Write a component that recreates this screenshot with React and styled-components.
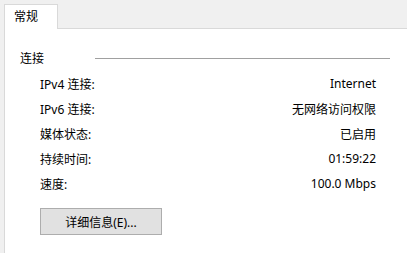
import React from "react";
import styled, { createGlobalStyle } from "styled-components";

const Global = createGlobalStyle`
  html, body { margin: 0; padding: 0; background: #f0f0f0; }
  body {
    width: 407px; height: 253px; overflow: hidden;
    font-family: "Noto Sans", "Noto Sans CJK SC", sans-serif;
    font-size: 12px; color: #000;
  }
`;

const Window = styled.div`
  display: flex;
  flex-direction: column;
  width: 407px;
  height: 253px;
`;

const TabStrip = styled.div`
  display: flex;
  align-items: flex-end;
  height: 28px;
  padding-left: 4px;
  position: relative;
  z-index: 1;
`;

const Tab = styled.div`
  box-sizing: border-box;
  width: 54px;
  height: 25px;
  margin-bottom: -1px;
  padding: 2px 0 0 9px;
  background: #fff;
  border: 1px solid #d9d9d9;
  border-bottom: none;
  line-height: 19px;
`;

const Panel = styled.div`
  flex: 1;
  margin-left: 4px;
  background: #fff;
  border-left: 1px solid #d9d9d9;
  border-top: 1px solid #d9d9d9;
  padding: 17px 0 0 15px;
`;

const GroupHeader = styled.div`
  display: flex;
  align-items: center;
  height: 25px;
`;

const GroupLabel = styled.span`
  width: 75px;
  line-height: 25px;
`;

const GroupLine = styled.div`
  width: 295px;
  height: 1px;
  background: #a0a0a0;
`;

const Rows = styled.div`
  display: flex;
  flex-direction: column;
  padding-left: 20px;
  width: 336px;
`;

const Row = styled.div`
  display: flex;
  justify-content: space-between;
  align-items: center;
  height: 25px;
`;

const Button = styled.button`
  box-sizing: border-box;
  margin: 12px 0 0 20px;
  width: 122px;
  height: 27px;
  background: #e1e1e1;
  border: 1px solid #adadad;
  font: inherit;
  color: #000;
  padding: 0;
`;

const data = [
  ["IPv4 连接:", "Internet"],
  ["IPv6 连接:", "无网络访问权限"],
  ["媒体状态:", "已启用"],
  ["持续时间:", "01:59:22"],
  ["速度:", "100.0 Mbps"],
];

export default function App() {
  return (
    <Window>
      <Global />
      <TabStrip>
        <Tab>常规</Tab>
      </TabStrip>
      <Panel>
        <GroupHeader>
          <GroupLabel>连接</GroupLabel>
          <GroupLine />
        </GroupHeader>
        <Rows>
          {data.map(([k, v]) => (
            <Row key={k}>
              <span>{k}</span>
              <span>{v}</span>
            </Row>
          ))}
        </Rows>
        <Button>详细信息(E)...</Button>
      </Panel>
    </Window>
  );
}
